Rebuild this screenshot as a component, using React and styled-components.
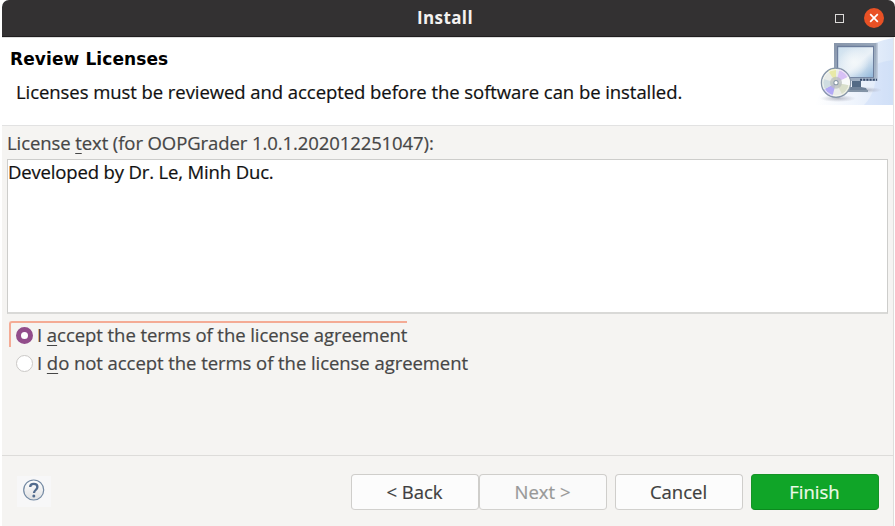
import React, { useState } from "react";
import styled, { createGlobalStyle } from "styled-components";

const GlobalStyle = createGlobalStyle`
  * { box-sizing: border-box; }
  body { margin: 0; background: #fff; overflow: hidden; }
`;

const Dialog = styled.main`
  width: 895px;
  height: 526px;
  padding: 0 1px 0 2px;
  display: flex;
  flex-direction: column;
  background: #fff;
  color: #464646;
  font-family: "Open Sans", "Noto Sans", sans-serif;
  font-size: 18.5px;
  line-height: 24px;
  -webkit-text-stroke-width: 0.2px;
`;

const TitleBar = styled.header`
  height: 37px;
  flex: none;
  display: grid;
  grid-template-columns: 1fr auto 1fr;
  align-items: center;
  background: #333132;
  border-bottom: 1px solid #1f1d1e;
  border-radius: 7px 7px 0 0;
  margin-right: -1px;
  padding-right: 11px;
`;

const WindowTitle = styled.h1`
  grid-column: 2;
  margin: 0 0 0 4px;
  font-size: 17px;
  line-height: 24px;
  font-weight: 700;
  -webkit-text-stroke-width: 0;
  color: #f4f2f0;
  letter-spacing: ${(p) => p.$track}px;
`;

const WindowControls = styled.div`
  display: flex;
  justify-content: flex-end;
  align-items: center;
  gap: 20px;
`;

const Maximize = styled.button`
  width: 9px;
  height: 9px;
  padding: 0;
  border: 1px solid #dcdad9;
  background: transparent;
`;

const Close = styled.button`
  width: 20px;
  height: 20px;
  padding: 0;
  border: 0;
  border-radius: 50%;
  background: #e95125;
  display: grid;
  place-items: center;
`;

const Banner = styled.section`
  height: 89px;
  flex: none;
  display: flex;
  justify-content: space-between;
  background: #fff;
  border-top: 1px solid #dedede;
  border-bottom: 1px solid #e2e2e2;
  border-right: 1px solid #e4e4e4;
`;

const BannerText = styled.div`
  padding: 9px 0 0 8px;
`;

const Heading = styled.h2`
  margin: 0;
  font-family: "DejaVu Sans", sans-serif;
  font-size: 17px;
  line-height: 24px;
  font-weight: 700;
  -webkit-text-stroke-width: 0;
  color: #000;
`;

const Line = styled.span`
  white-space: nowrap;
  letter-spacing: ${(p) => p.$track || 0}px;
  u { text-underline-offset: 3px; text-decoration-thickness: 1px; }
`;

const Description = styled.p`
  margin: 9px 0 0 6px;
  color: #111;
`;

const Body = styled.section`
  flex: 1;
  display: flex;
  flex-direction: column;
  background: #f5f4f2;
  border-right: 1px solid #dededc;
`;

const LicenseLabel = styled.label`
  height: 33px;
  padding: 5px 0 0 5px;
`;

const LicenseBox = styled.div`
  width: 881px;
  height: 155px;
  margin-left: 5px;
  border: 1px solid #cdcdcb;
  border-bottom-width: 2px;
  border-bottom-color: #d9d9d7;
  background: #fff;
  color: #111;
`;

const Choices = styled.div`
  flex: 1;
  padding: 7px 0 0 7px;
  display: flex;
  flex-direction: column;
  align-items: flex-start;
`;

const Choice = styled.label`
  height: 28px;
  padding: 0 0 0 7px;
  display: flex;
  align-items: center;
  gap: 4px;
`;

const FocusedChoice = styled(Choice)`
  height: 26px;
  margin-bottom: 2px;
  padding: 0 0 0 5px;
  width: 398px;
  border-top: 2px solid #f4ab95;
  border-left: 2px solid #f4ab95;
  border-top-left-radius: 3px;
`;

const Radio = styled.input`
  appearance: none;
  flex: none;
  width: 17px;
  height: 17px;
  margin: 0;
  border-radius: 50%;
  border: 1px solid #cac8c6;
  background: #fff;
  &:checked { border: 5.5px solid #924d8b; }
`;

const Footer = styled.footer`
  height: 71px;
  flex: none;
  padding: 18px 14px 0 15px;
  display: flex;
  align-items: flex-start;
  background: #f5f4f2;
  border-top: 1px solid #dddcda;
  border-right: 1px solid #dededc;
`;

const Help = styled.button`
  width: 34px;
  height: 31px;
  margin: 2px auto 0 0;
  padding: 0;
  border: 0;
  background: #f7f7f8;
`;

const Button = styled.button`
  width: 128px;
  height: 36px;
  margin-left: ${(p) => p.$gap || 0}px;
  padding: 0 1px 1px 0;
  border: 1px solid ${(p) => (p.$primary ? "#159326" : "#cfcecb")};
  border-bottom-color: ${(p) => (p.$primary ? "#0c8a1f" : "#d2d1ce")};
  border-radius: 4px;
  background: ${(p) => (p.$primary ? "#10a528" : "#fcfcfc")};
  color: ${(p) => (p.$primary ? "#effbe9" : "#3f3f3f")};
  font: inherit;
  line-height: 28px;
  &:disabled { background: #fafafa; color: #989898; }
`;

const SoftwareArt = () => (
  <svg width="78" height="67" viewBox="815 38 78 67">
    <defs>
      <linearGradient id="sky" x1="0" x2="1">
        <stop offset="0" stopColor="#fff" />
        <stop offset=".55" stopColor="#edf3fc" />
        <stop offset="1" stopColor="#d9e6f8" />
      </linearGradient>
      <linearGradient id="screen" x1="0" y1="0" x2="1" y2="1">
        <stop offset="0" stopColor="#ccdfee" />
        <stop offset=".55" stopColor="#eaf1f7" />
        <stop offset="1" stopColor="#8fb6da" />
      </linearGradient>
      <linearGradient id="frame" x1="0" y1="0" x2="1" y2="1">
        <stop offset="0" stopColor="#8795aa" />
        <stop offset="1" stopColor="#a9b9cc" />
      </linearGradient>
      <radialGradient id="glow"><stop offset="0" stopColor="#f4f8fa" /><stop offset="1" stopColor="#f4f8fa" stopOpacity="0" /></radialGradient>
      <radialGradient id="shade"><stop offset="0" stopColor="#999dad" stopOpacity=".65" /><stop offset="1" stopColor="#a5a9b9" stopOpacity="0" /></radialGradient>
      <clipPath id="disc"><circle cx="836" cy="82.7" r="14" /></clipPath>
    </defs>
    <path d="M815 105Q822 88 833 75Q854 45 893 38V105Z" fill="url(#sky)" />
    <path d="M876 64Q885 61 893 60V105H864Q878 91 876 64Z" fill="#bfd5f5" opacity=".35" />
    <ellipse cx="867" cy="90" rx="15" ry="3" fill="url(#shade)" />
    <ellipse cx="838" cy="98.5" rx="18" ry="3.5" fill="url(#shade)" />
    <path d="M852 80H861V87L866 88L868 92H848V87H852Z" fill="#6f8299" />
    <path d="M852 81H861V87H852Z" fill="#536a85" />
    <path d="M848 90H868V92H848Z" fill="#8394a6" />
    <rect x="834" y="43" width="43.5" height="38" fill="url(#frame)" />
    <rect x="837" y="45.8" width="37" height="32" fill="#6c7d9c" />
    <rect x="838.2" y="47.2" width="34.8" height="29.8" fill="url(#screen)" />
    <rect x="839" y="48" width="30" height="28" fill="url(#glow)" />
    <path d="M877 43V81" stroke="#c1cbdb" />
    <path d="M860 79.7H877" stroke="#34486b" strokeWidth="2" strokeDasharray="2 1.2" />
    <circle cx="836" cy="82.7" r="14.5" fill="#e9ece8" stroke="#8796a9" strokeWidth="1.5" />
    <g clipPath="url(#disc)">
      <path d="M836 82.7L827 69L836 67Z" fill="#e8e9a7" />
      <path d="M836 82.7L840 68L850 76Z" fill="#d8c1f6" />
      <path d="M836 82.7L850 76L852 86Z" fill="#f8faf9" />
      <path d="M836 82.7L823 90L832 98Z" fill="#b2a9f6" />
      <path d="M836 82.7L820 78L821 91Z" fill="#cfdde1" />
      <path d="M836 82.7L852 86L843 96Z" fill="#d9dfca" />
    </g>
    <circle cx="836" cy="82.7" r="13.2" fill="none" stroke="#fafaf2" strokeWidth=".8" />
    <circle cx="836" cy="82.7" r="6" fill="#b9bfbe" opacity=".75" />
    <circle cx="836" cy="82.7" r="2.6" fill="#8897a7" />
    <circle cx="836" cy="82.7" r="1.6" fill="#fff" />
  </svg>
);

const HelpGlyph = () => (
  <svg width="34" height="31" viewBox="0 0 34 31">
    <defs>
      <linearGradient id="help" x1="0" y1="0" x2="0" y2="1"><stop stopColor="#fff" /><stop offset="1" stopColor="#dfe0e2" /></linearGradient>
    </defs>
    <circle cx="16.7" cy="14" r="10" fill="url(#help)" stroke="#7389a3" strokeWidth="1.2" />
    <path d="M13.2 11C13.2 6.9 20.4 7 20.4 10.9C20.4 14 17 14 17 17" fill="none" stroke="#526b8d" strokeWidth="2.3" />
    <circle cx="16.8" cy="20" r="1.5" fill="#526b8d" />
  </svg>
);

export default function App() {
  const [accepted, setAccepted] = useState(true);
  return (
    <>
      <GlobalStyle />
      <Dialog>
        <TitleBar>
          <WindowTitle $track={0.4}>Install</WindowTitle>
          <WindowControls>
            <Maximize aria-label="Maximize" />
            <Close aria-label="Close">
              <svg width="10" height="10" viewBox="0 0 10 10"><path d="M1.2 1.2L8.8 8.8M8.8 1.2L1.2 8.8" stroke="#fff" strokeWidth="1.7" /></svg>
            </Close>
          </WindowControls>
        </TitleBar>
        <Banner>
          <BannerText>
            <Heading><Line $track={0.1}>Review Licenses</Line></Heading>
            <Description><Line $track={-0.065}>Licenses must be reviewed and accepted before the software can be installed.</Line></Description>
          </BannerText>
          <SoftwareArt />
        </Banner>
        <Body>
          <LicenseLabel><Line $track={-0.09}>License <u>t</u>ext (for OOPGrader 1.0.1.202012251047):</Line></LicenseLabel>
          <LicenseBox><Line $track={-0.15}>Developed by Dr. Le, Minh Duc.</Line></LicenseBox>
          <Choices>
            <FocusedChoice>
              <Radio type="radio" name="terms" checked={accepted} onChange={() => setAccepted(true)} />
              <Line $track={-0.06}>I <u>a</u>ccept the terms of the license agreement</Line>
            </FocusedChoice>
            <Choice>
              <Radio type="radio" name="terms" checked={!accepted} onChange={() => setAccepted(false)} />
              <Line $track={-0.06}>I <u>d</u>o not accept the terms of the license agreement</Line>
            </Choice>
          </Choices>
        </Body>
        <Footer>
          <Help aria-label="Help"><HelpGlyph /></Help>
          <Button>&lt; Back</Button>
          <Button disabled>Next &gt;</Button>
          <Button $gap={8}>Cancel</Button>
          <Button $gap={8} $primary>Finish</Button>
        </Footer>
      </Dialog>
    </>
  );
}
